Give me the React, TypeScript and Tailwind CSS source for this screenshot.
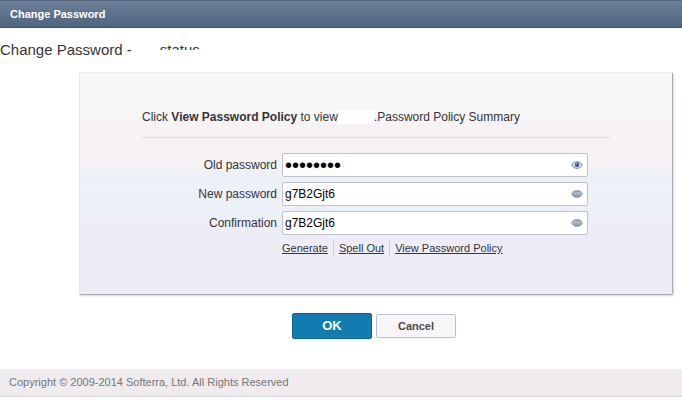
import { useState } from 'react';
import type { ReactNode } from 'react';

function OpenEye() {
  return (
    <svg width="12" height="8" viewBox="0 0 12 8" aria-hidden="true">
      <path d="M0.7 4C2 1.6 4 0.7 6 0.7S10 1.6 11.3 4C10 6.4 8 7.3 6 7.3S2 6.4 0.7 4Z" fill="#e6eef5" stroke="#6483a3" strokeWidth="1" />
      <circle cx="6" cy="3.8" r="2.3" fill="#31517d" />
      <circle cx="5.2" cy="3" r="0.8" fill="#c6d6e8" />
    </svg>
  );
}

function ClosedEye() {
  return (
    <svg width="12" height="8" viewBox="0 0 12 8" aria-hidden="true">
      <defs>
        <linearGradient id="lid" x1="0" y1="0" x2="0" y2="1">
          <stop offset="0" stopColor="#8797aa" />
          <stop offset="0.35" stopColor="#b3bfcc" />
          <stop offset="1" stopColor="#8292a5" />
        </linearGradient>
      </defs>
      <path
        d="M0.6 4C1.6 2.2 2.6 0.8 4.4 0.8H7.6C9.4 0.8 10.4 2.2 11.4 4C10.2 6 9 7.2 7.2 7.2H4.8C3 7.2 1.8 6 0.6 4Z"
        fill="url(#lid)"
        stroke="#76889d"
        strokeWidth="0.7"
      />
    </svg>
  );
}

function PasswordField({ id, label, initial, masked }: { id: string; label: string; initial: string; masked: boolean }) {
  const [value, setValue] = useState(initial);
  const [hidden, setHidden] = useState(masked);
  return (
    <div className="flex items-center gap-1">
      <label htmlFor={id} className="w-[136px] shrink-0 pr-px text-right text-xs leading-6">
        {label}
      </label>
      <div className="flex h-6 min-w-0 flex-1 items-center rounded-xs border border-[#bfc1cb] bg-white pr-1">
        <input
          id={id}
          type={hidden ? 'password' : 'text'}
          value={value}
          onChange={(e) => setValue(e.target.value)}
          className={`h-full min-w-0 flex-1 bg-transparent px-0.5 text-black outline-none ${hidden ? 'text-xl' : 'text-xs'}`}
        />
        <button type="button" aria-label="Toggle visibility" onClick={() => setHidden(!hidden)}>
          {hidden ? <OpenEye /> : <ClosedEye />}
        </button>
      </div>
    </div>
  );
}

function PolicyLink({ children }: { children: ReactNode }) {
  return (
    <a href="#" className="underline">
      {children}
    </a>
  );
}

export default function App() {
  return (
    <div className="bg-white font-['Liberation_Sans',Arial,sans-serif] text-[#353438]">
      <header className="flex h-7 items-center border-y border-t-[#52647b] border-b-[#3f5268] bg-linear-to-b from-[#6c7f99] to-[#4f657f] px-2.5 text-[11px] font-bold text-white">
        Change Password
      </header>
      <h1 className="flex items-center pt-3 text-[15px] leading-5">
        Change Password -
        <span className="ml-7 h-2.5 self-start overflow-hidden">status</span>
      </h1>
      <main className="mt-3 mr-[9px] ml-[79px]">
        <form onSubmit={(e) => e.preventDefault()}>
          <section className="rounded-xs border border-t-[#eeeeee] border-r-[#aaa8b0] border-b-[#aaa8b0] border-l-[#e6e4ea] bg-[linear-gradient(#f7f7f7_18%,#f6f2f6_24%,#f6f2f6_42%,#edf1f7_45%,#ecf1f9_62%,#eeedf7_70%)] px-[62px] pt-9 pb-[37px] shadow-[1px_1px_2px_#d8d6dc]">
            <p className="flex items-center border-b border-[#d3deec] pb-3 text-xs leading-4">
              <span>
                Click <b>View Password Policy</b> to view
              </span>
              <span className="h-3.5 w-9 bg-white" />
              <span>.Password Policy Summary</span>
            </p>
            <div className="mt-[15px] mr-[22px] flex flex-col gap-[5px]">
              <PasswordField id="old" label="Old password" initial="password" masked />
              <PasswordField id="new" label="New password" initial="g7B2Gjt6" masked={false} />
              <PasswordField id="confirm" label="Confirmation" initial="g7B2Gjt6" masked={false} />
            </div>
            <nav className="mt-1 ml-[140px] flex gap-[5px] text-[11px] leading-[18px]">
              <PolicyLink>Generate</PolicyLink>
              <span className="w-px bg-[#cfcfdd]" />
              <PolicyLink>Spell Out</PolicyLink>
              <span className="w-px bg-[#cfcfdd]" />
              <PolicyLink>View Password Policy</PolicyLink>
            </nav>
          </section>
          <div className="mt-[18px] flex items-center justify-center gap-1 pr-1">
            <button type="submit" className="h-[26px] w-20 rounded-xs border border-[#0b6394] bg-[#127bb0] text-[13px] font-bold text-white">
              OK
            </button>
            <button type="button" className="h-6 w-20 rounded-xs border border-[#c3c0c6] bg-[#f8f5f8] text-[11px] font-bold text-[#4b494f]">
              Cancel
            </button>
          </div>
        </form>
      </main>
      <footer className="mt-[30px] border-b border-[#dad6dc] bg-[#efebee] px-[9px] py-[3px] text-[11px] leading-[21px] text-[#777579]">
        Copyright © 2009-2014 Softerra, Ltd. All Rights Reserved
      </footer>
    </div>
  );
}
